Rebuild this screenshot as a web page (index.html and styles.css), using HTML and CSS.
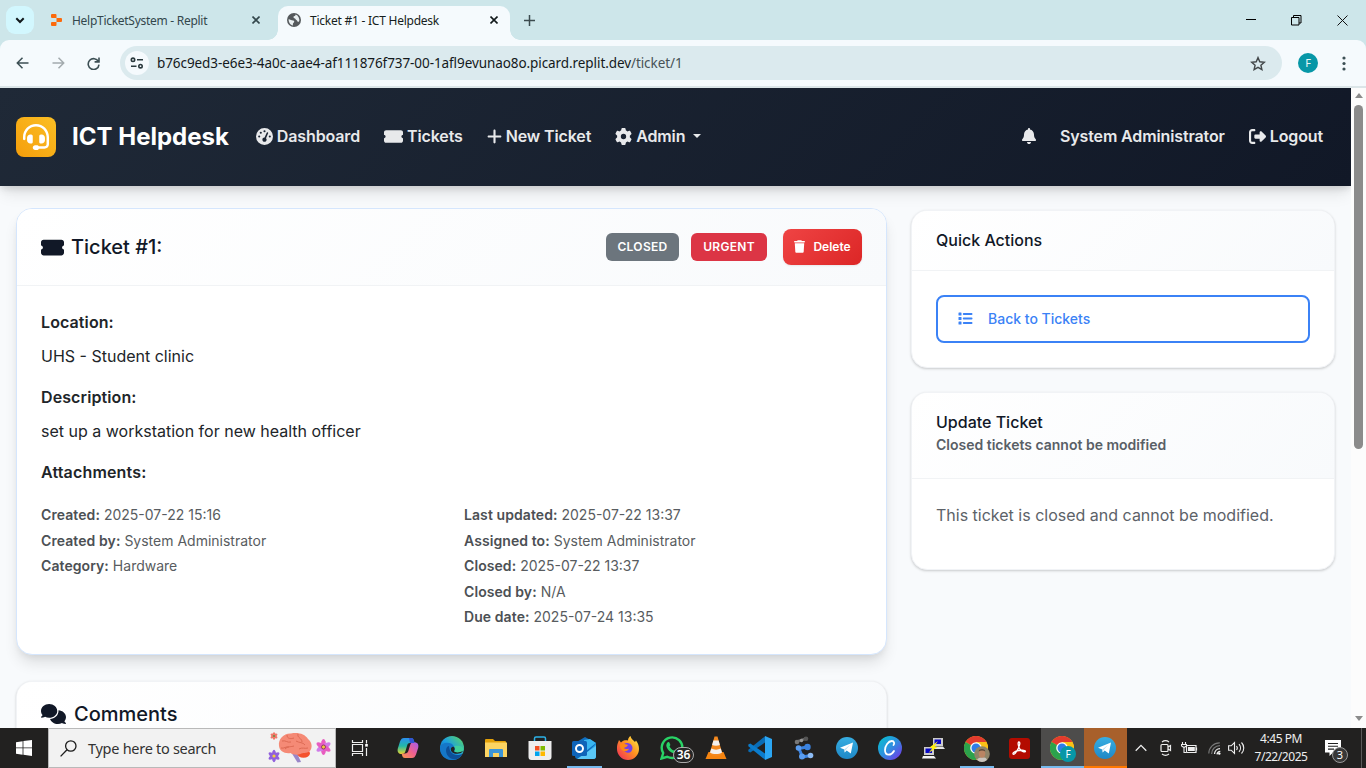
FILE: index.html
```html
<!DOCTYPE html>
<html lang="en">
<head>
<meta charset="utf-8">
<title>Ticket #1 - ICT Helpdesk</title>
<link rel="stylesheet" href="styles.css">
</head>
<body>
<svg class="defs" width="0" height="0">
  <defs>
    <linearGradient id="g-edge" x1="0" y1="1" x2="1" y2="0"><stop offset="0" stop-color="#0c59a4"/><stop offset=".5" stop-color="#1b9de2"/><stop offset="1" stop-color="#5fdc5a"/></linearGradient>
    <linearGradient id="g-cop1" x1="0" y1="0" x2="0" y2="1"><stop offset="0" stop-color="#2b8ef0"/><stop offset=".5" stop-color="#22b8a8"/><stop offset="1" stop-color="#e8d52c"/></linearGradient>
    <linearGradient id="g-cop2" x1="1" y1="0" x2="0" y2="1"><stop offset="0" stop-color="#a35cf0"/><stop offset=".5" stop-color="#f0608e"/><stop offset="1" stop-color="#fb9a4b"/></linearGradient>
    <linearGradient id="g-canva" x1="0" y1="0" x2="1" y2="1"><stop offset="0" stop-color="#00c4cc"/><stop offset=".5" stop-color="#2f8fe0"/><stop offset="1" stop-color="#7d2ae8"/></linearGradient>
    <linearGradient id="g-tele" x1="0" y1="0" x2="0" y2="1"><stop offset="0" stop-color="#37aee2"/><stop offset="1" stop-color="#1e88c6"/></linearGradient>
    <linearGradient id="g-fox" x1="1" y1="0" x2="0" y2="1"><stop offset="0" stop-color="#fff44f"/><stop offset=".45" stop-color="#ff9420"/><stop offset="1" stop-color="#f0235f"/></linearGradient>
    <symbol id="i-ticket" viewBox="0 0 576 512"><path d="M64 64C28.7 64 0 92.7 0 128v64c0 8.8 7.4 15.7 15.7 18.6C34.5 217.1 48 235 48 256s-13.5 38.9-32.3 45.4C7.4 304.3 0 311.2 0 320v64c0 35.3 28.7 64 64 64H512c35.3 0 64-28.7 64-64V320c0-8.8-7.4-15.7-15.7-18.6C541.5 294.9 528 277 528 256s13.5-38.9 32.3-45.4c8.3-2.9 15.7-9.8 15.7-18.6V128c0-35.3-28.7-64-64-64H64z"/></symbol>
    <symbol id="i-chrome" viewBox="0 0 24 24"><circle cx="12" cy="12" r="12" fill="#fbc116"/><path d="M12 12 1.6 6A12 12 0 0 1 22.4 6L12 6z" fill="#e33b2e"/><path d="M1.6 6A12 12 0 0 0 12 24L17.2 15 12 12z" fill="#2ba24c"/><path d="M12 6H22.4A12 12 0 0 1 12 24l5.2-9z" fill="#fbc116"/><circle cx="12" cy="12" r="5.8" fill="#fff"/><circle cx="12" cy="12" r="4.5" fill="#2f7de8"/></symbol>
    <symbol id="i-tele" viewBox="0 0 22 22"><circle cx="11" cy="11" r="11" fill="url(#g-tele)"/><path d="M4 10.8 17 5.6 14.8 16.5 10.7 13.6 8.7 15.6 8.3 12.4z" fill="#fff"/><path d="M8.3 12.4 14.2 7.8 9.3 13.2 8.7 15.6z" fill="#b9dcef"/></symbol>
    <symbol id="i-close" viewBox="0 0 8 8"><path d="M.5.5l7 7M7.5.5l-7 7" fill="none" stroke="currentColor" stroke-width="1.6"/></symbol>
  </defs>
</svg>

<header class="tabstrip">
  <span class="tab-search"><svg width="10" height="7" viewBox="0 0 10 7"><path d="M1.3 1.3 5 5l3.700-3.700" fill="none" stroke="#11191b" stroke-width="2"/></svg></span>
  <div class="tab">
    <svg class="favicon replit" width="11" height="12" viewBox="0 0 11 12"><path d="M1 0h3.500a1 1 0 0 1 1 1v3H1a1 1 0 0 1-1-1V1a1 1 0 0 1 1-1zM5.500 4H10a1 1 0 0 1 1 1v2a1 1 0 0 1-1 1H5.500zM1 8h4.500v3a1 1 0 0 1-1 1H1a1 1 0 0 1-1-1V9a1 1 0 0 1 1-1z" fill="#fc6a0c"/></svg>
    <span class="tab-title t1">HelpTicketSystem - Replit</span>
    <svg class="tab-close" width="8" height="8"><use href="#i-close"/></svg>
  </div>
  <div class="tab active">
    <svg class="favicon" width="14" height="14" viewBox="0 0 14 14"><circle cx="7" cy="7" r="7" fill="#55595c"/><path d="M1.600 6.200C3 6 4.500 7.500 6 7.500c1.500 0 1.600 1.500.6 2.200-.9.600-.6 1.500-.7 2.700C3.500 12 1.500 9.500 1.600 6.200zM8.600 1.600c-.2 1-.5 1.600-1.600 1.700-.7.100-.6 1.200-.1 1.700.6.600 1.500.3 1.700 1.200.2.900 1.500.7 1.700 1.700.1.700.9 1.200 1.700.7A5.600 5.600 0 0 0 8.600 1.600z" fill="#e9eff1"/></svg>
    <span class="tab-title t2">Ticket #1 - ICT Helpdesk</span>
    <svg class="tab-close" width="8" height="8"><use href="#i-close"/></svg>
  </div>
  <svg class="new-tab" width="11" height="11" viewBox="0 0 11 11"><path d="M5.500 0v11M0 5.500h11" stroke="#3c4b4f" stroke-width="1.500"/></svg>
  <div class="window-controls">
    <svg width="10" height="10" viewBox="0 0 10 10"><path d="M0 4.500h10" stroke="#000"/></svg>
    <svg width="11" height="11" viewBox="0 0 11 11"><path d="M.5 2.500h7.500v7.500H.5zM2.500 2.500V.5H10v7.500H8" fill="none" stroke="#000"/></svg>
    <svg width="11" height="11" viewBox="0 0 11 11"><path d="M.5.5l10 10M10.500.5l-10 10" stroke="#111"/></svg>
  </div>
</header>

<div class="toolbar">
  <svg class="tb-back" width="13" height="12" viewBox="0 0 13 12"><path d="M12.500 6H1.500M6.500.8 1.300 6l5.200 5.200" fill="none" stroke="#3c4f54" stroke-width="1.500"/></svg>
  <svg class="tb-fwd" width="13" height="12" viewBox="0 0 13 12"><path d="M.5 6h11M6.500.8 11.700 6l-5.200 5.200" fill="none" stroke="#a3abae" stroke-width="1.500"/></svg>
  <svg class="tb-reload" width="13" height="13" viewBox="0 0 13 13"><path d="M11.400 4.500A5.400 5.400 0 1 0 12 7.600M12 .6v4.300H7.600" fill="none" stroke="#3c4f54" stroke-width="1.600"/></svg>
  <div class="omnibox">
    <span class="site-info"><svg width="14" height="12" viewBox="0 0 14 12" fill="none" stroke="#2b3a3e" stroke-width="1.600"><circle cx="3" cy="2.800" r="1.700"/><path d="M7 2.800h6M1 9.200h5.500"/><circle cx="10.500" cy="9.200" r="1.700"/></svg></span>
    <span class="url">b76c9ed3-e6e3-4a0c-aae4-af111876f737-00-1afl9evunao8o.picard.replit.dev<span class="path">/ticket/1</span></span>
    <svg class="star" width="16" height="15" viewBox="0 0 16 15"><path d="M8 1.600l1.800 4.200 4.500.4-3.400 3 1 4.400L8 11.300l-3.900 2.300 1-4.400-3.400-3 4.500-.4z" fill="none" stroke="#43484a" stroke-width="1.400"/></svg>
  </div>
  <span class="profile">F</span>
  <svg class="menu" width="4" height="15" viewBox="0 0 4 15" fill="#3c4f54"><circle cx="2" cy="2" r="1.600"/><circle cx="2" cy="7.500" r="1.600"/><circle cx="2" cy="13" r="1.600"/></svg>
</div>

<div class="viewport">
  <div class="page">
    <nav class="navbar">
      <span class="logo"><svg width="26" height="26" viewBox="0 0 512 512" fill="#fff"><path d="M256 48C141.100 48 48 141.100 48 256v40c0 13.300-10.700 24-24 24s-24-10.700-24-24V256C0 114.600 114.600 0 256 0S512 114.600 512 256V400.100c0 48.600-39.400 88-88.100 88L313.600 488c-8.300 14.300-23.800 24-41.600 24H240c-26.500 0-48-21.500-48-48s21.500-48 48-48h32c17.800 0 33.300 9.700 41.600 24l110.400 .1c22.100 0 40-17.900 40-40V256c0-114.900-93.100-208-208-208zM144 208h16c17.700 0 32 14.300 32 32V352c0 17.700-14.300 32-32 32H144c-35.300 0-64-28.700-64-64V272c0-35.300 28.700-64 64-64zm224 0c35.300 0 64 28.700 64 64v48c0 35.300-28.700 64-64 64H352c-17.700 0-32-14.300-32-32V240c0-17.700 14.300-32 32-32h16z"/></svg></span>
      <span class="brand">ICT Helpdesk</span>
      <a class="nav-link"><svg width="17" height="17" viewBox="0 0 512 512"><path d="M0 256a256 256 0 1 1 512 0A256 256 0 1 1 0 256zM288 96a32 32 0 1 0 -64 0 32 32 0 1 0 64 0zM256 416c35.300 0 64-28.700 64-64c0-17.400-6.900-33.100-18.100-44.600L366 161.700c5.300-12.100-.2-26.300-12.300-31.600s-26.300 .2-31.600 12.300L257.900 288c-.6 0-1.300 0-1.900 0c-35.300 0-64 28.700-64 64s28.700 64 64 64zM176 144a32 32 0 1 0 -64 0 32 32 0 1 0 64 0zM96 288a32 32 0 1 0 0-64 32 32 0 1 0 0 64zm352-32a32 32 0 1 0 -64 0 32 32 0 1 0 64 0z"/></svg>Dashboard</a>
      <a class="nav-link"><svg width="19" height="17"><use href="#i-ticket"/></svg>Tickets</a>
      <a class="nav-link"><svg width="15" height="17" viewBox="0 0 448 512"><path d="M256 80c0-17.700-14.300-32-32-32s-32 14.300-32 32V224H48c-17.700 0-32 14.300-32 32s14.300 32 32 32H192V432c0 17.700 14.300 32 32 32s32-14.300 32-32V288H400c17.700 0 32-14.300 32-32s-14.300-32-32-32H256V80z"/></svg>New Ticket</a>
      <a class="nav-link admin"><svg width="17" height="17" viewBox="0 0 512 512"><path d="M495.900 166.600c3.200 8.700 .5 18.400-6.400 24.600l-43.300 39.400c1.100 8.300 1.700 16.800 1.700 25.400s-.6 17.100-1.700 25.400l43.300 39.400c6.900 6.200 9.600 15.900 6.400 24.600c-4.400 11.900-9.700 23.300-15.800 34.300l-4.700 8.100c-6.600 11-14 21.400-22.100 31.200c-5.900 7.200-15.700 9.600-24.500 6.800l-55.700-17.700c-13.400 10.300-28.200 18.900-44 25.400l-12.500 57.100c-2 9.100-9 16.300-18.200 17.800c-13.800 2.300-28 3.500-42.500 3.500s-28.700-1.200-42.500-3.500c-9.200-1.500-16.200-8.700-18.200-17.800l-12.500-57.100c-15.800-6.500-30.600-15.100-44-25.400L83.100 425.900c-8.800 2.800-18.600 .3-24.500-6.800c-8.100-9.800-15.500-20.200-22.100-31.200l-4.700-8.100c-6.100-11-11.400-22.400-15.800-34.300c-3.200-8.700-.5-18.400 6.400-24.600l43.300-39.400C64.600 273.100 64 264.600 64 256s.6-17.100 1.700-25.400L22.400 191.200c-6.900-6.200-9.600-15.900-6.400-24.600c4.400-11.900 9.700-23.300 15.800-34.300l4.700-8.100c6.600-11 14-21.400 22.100-31.200c5.900-7.200 15.700-9.600 24.500-6.800l55.700 17.700c13.400-10.300 28.200-18.900 44-25.400l12.500-57.100c2-9.100 9-16.300 18.200-17.800C227.300 1.200 241.500 0 256 0s28.700 1.200 42.500 3.500c9.200 1.500 16.200 8.700 18.200 17.800l12.500 57.100c15.800 6.500 30.600 15.100 44 25.400l55.700-17.700c8.800-2.800 18.600-.3 24.500 6.800c8.100 9.800 15.500 20.200 22.100 31.200l4.700 8.100c6.100 11 11.400 22.400 15.800 34.300zM256 336a80 80 0 1 0 0-160 80 80 0 1 0 0 160z"/></svg>Admin<i class="caret"></i></a>
      <div class="nav-right">
        <svg width="14" height="16" viewBox="0 0 448 512"><path d="M224 0c-17.700 0-32 14.300-32 32V51.200C119 66 64 130.600 64 208v18.800c0 47-17.300 92.400-48.500 127.600l-7.400 8.300c-8.400 9.400-10.400 22.900-5.300 34.400S19.400 416 32 416H416c12.600 0 24-7.400 29.200-18.900s3.100-25-5.300-34.400l-7.400-8.300C401.300 319.200 384 273.900 384 226.800V208c0-77.400-55-142-128-156.800V32c0-17.700-14.300-32-32-32zm45.300 493.300c12-12 18.700-28.300 18.700-45.300H224 160c0 17 6.700 33.300 18.700 45.300s28.300 18.700 45.300 18.700s33.300-6.700 45.300-18.700z"/></svg>
        <a class="user">System Administrator</a>
        <a class="nav-link logout"><svg width="17" height="17" viewBox="0 0 512 512"><path d="M377.900 105.900L500.700 228.700c7.200 7.200 11.300 17.100 11.300 27.300s-4.100 20.100-11.300 27.300L377.900 406.100c-6.400 6.400-15 9.900-24 9.900c-18.700 0-33.900-15.200-33.900-33.900l0-62.100-128 0c-17.700 0-32-14.300-32-32l0-64c0-17.700 14.300-32 32-32l128 0 0-62.100c0-18.700 15.200-33.900 33.900-33.900c9 0 17.600 3.600 24 9.900zM160 96L96 96c-17.700 0-32 14.300-32 32l0 256c0 17.700 14.300 32 32 32l64 0c17.700 0 32 14.300 32 32s-14.300 32-32 32l-64 0c-53 0-96-43-96-96L0 128C0 75 43 32 96 32l64 0c17.700 0 32 14.300 32 32s-14.300 32-32 32z"/></svg>Logout</a>
      </div>
    </nav>

    <main class="columns">
      <div class="col-main">
        <section class="card ticket">
          <div class="card-head ticket-head">
            <svg width="23" height="21" class="dark" viewBox="0 0 576 512" preserveAspectRatio="none"><use href="#i-ticket" width="576" height="512"/></svg>
            <h1>Ticket #1:</h1>
            <span class="badge closed">CLOSED</span>
            <span class="badge urgent">URGENT</span>
            <button class="delete"><svg width="11" height="13" viewBox="0 0 448 512" fill="#fff"><path d="M135.200 17.700L128 32H32C14.300 32 0 46.300 0 64S14.300 96 32 96H416c17.700 0 32-14.300 32-32s-14.300-32-32-32H320l-7.200-14.300C307.400 6.800 296.300 0 284.200 0H163.800c-12.100 0-23.200 6.800-28.600 17.700zM416 128H32L53.200 467c1.600 25.300 22.600 45 47.900 45H346.900c25.300 0 46.300-19.700 47.900-45L416 128z"/></svg>Delete</button>
          </div>
          <div class="ticket-body">
            <h2>Location:</h2>
            <p>UHS - Student clinic</p>
            <h2>Description:</h2>
            <p>set up a workstation for new health officer</p>
            <h2 class="last">Attachments:</h2>
            <div class="meta">
              <div><p><b>Created:</b> 2025-07-22 15:16</p><p><b>Created by:</b> System Administrator</p><p><b>Category:</b> Hardware</p></div>
              <div><p><b>Last updated:</b> 2025-07-22 13:37</p><p><b>Assigned to:</b> System Administrator</p><p><b>Closed:</b> 2025-07-22 13:37</p><p><b>Closed by:</b> N/A</p><p><b>Due date:</b> 2025-07-24 13:35</p></div>
            </div>
          </div>
        </section>
        <section class="card comments">
          <div class="card-head comments-head">
            <svg width="25" height="20" viewBox="0 0 640 512" class="dark"><path d="M208 352c114.900 0 208-78.800 208-176S322.900 0 208 0S0 78.800 0 176c0 38.600 14.700 74.300 39.600 103.400c-3.500 9.400-8.700 17.700-14.200 24.700c-4.800 6.200-9.700 11-13.300 14.300c-1.800 1.600-3.300 2.900-4.300 3.700c-.5 .4-.9 .7-1.100 .8l-.2 .2C1 327.200-1.400 334.400 .8 340.900S9.100 352 16 352c21.800 0 43.800-5.600 62.100-12.500c9.200-3.500 17.800-7.400 25.200-11.400C134.100 343.300 169.800 352 208 352zM448 176c0 112.300-99.100 196.900-216.500 207C255.800 457.400 336.400 512 432 512c38.200 0 73.900-8.700 104.700-23.900c7.500 4 16 7.900 25.200 11.400c18.300 6.900 40.300 12.500 62.100 12.500c6.900 0 13.100-4.500 15.200-11.100c2.100-6.600-.2-13.800-5.800-17.900l-.2-.2c-.2-.2-.6-.4-1.100-.8c-1-.8-2.500-2-4.300-3.700c-3.600-3.300-8.500-8.100-13.300-14.300c-5.500-7-10.700-15.400-14.200-24.700c24.900-29 39.600-64.700 39.600-103.400c0-92.800-84.900-168.900-192.600-175.500c.4 5.100 .6 10.300 .6 15.500z"/></svg>
            <h1>Comments</h1>
          </div>
        </section>
      </div>
      <aside class="col-side">
        <section class="card">
          <div class="card-head quick-head"><h3>Quick Actions</h3></div>
          <div class="quick-body">
            <a class="back"><svg width="15" height="13" viewBox="0 0 15 13" fill="#3b82f6"><rect x=".5" y=".5" width="3" height="3" rx=".5"/><rect x=".5" y="5" width="3" height="3" rx=".5"/><rect x=".5" y="9.500" width="3" height="3" rx=".5"/><rect x="4.800" y="1" width="9.700" height="2" rx=".9"/><rect x="4.800" y="5.500" width="9.700" height="2" rx=".9"/><rect x="4.800" y="10" width="9.700" height="2" rx=".9"/></svg>Back to Tickets</a>
          </div>
        </section>
        <section class="card">
          <div class="card-head update-head"><h3>Update Ticket</h3><small>Closed tickets cannot be modified</small></div>
          <div class="update-body">This ticket is closed and cannot be modified.</div>
        </section>
      </aside>
    </main>
  </div>
  <div class="scrollbar"><i class="arrow up"></i><i class="thumb"></i><i class="arrow down"></i></div>
</div>

<footer class="taskbar">
  <span class="start"><svg width="16" height="16" viewBox="0 0 16 16" fill="#fff"><path d="M0 2.200 6.600 1.200v6.300H0zM7.400 1.100 16 0v7.500H7.400zM0 8.300h6.600v6.400L0 13.700zM7.400 8.300H16V16l-8.600-1.200z"/></svg></span>
  <div class="searchbox">
    <svg width="17" height="17" viewBox="0 0 17 17" fill="none" stroke="#1c1c1c" stroke-width="1.300"><circle cx="10.800" cy="6" r="5.200"/><path d="M7 9.800.6 16.400"/></svg>
    <span>Type here to search</span>
    <svg class="brain" width="66" height="34" viewBox="0 0 66 34">
      <g fill="#f0786a"><ellipse cx="7" cy="5" rx="1.500" ry="3.800"/><ellipse cx="7" cy="5" rx="1.500" ry="3.800" transform="rotate(60 7 5)"/><ellipse cx="7" cy="5" rx="1.500" ry="3.800" transform="rotate(120 7 5)"/></g>
      <g fill="#9160dc"><ellipse cx="7" cy="25" rx="2.200" ry="6.200"/><ellipse cx="7" cy="25" rx="2.200" ry="6.200" transform="rotate(60 7 25)"/><ellipse cx="7" cy="25" rx="2.200" ry="6.200" transform="rotate(120 7 25)"/></g>
      <g fill="#e85cc0"><ellipse cx="56.500" cy="16" rx="2.800" ry="8"/><ellipse cx="56.500" cy="16" rx="2.800" ry="8" transform="rotate(60 56.500 16)" fill="#d07be8"/><ellipse cx="56.500" cy="16" rx="2.800" ry="8" transform="rotate(120 56.500 16)"/></g>
      <circle cx="7" cy="5" r="1.100" fill="#6a8f45"/><circle cx="7" cy="25" r="1.600" fill="#f2d03a"/><circle cx="56.500" cy="16" r="2" fill="#f5c63c" stroke="#703060" stroke-width=".8"/>
      <path d="M24 21l5.500 0 4.500 10-3.500.5z" fill="#9a86c8"/>
      <ellipse cx="36.500" cy="22.500" rx="6.500" ry="4.200" fill="#f4522d"/>
      <path d="M12 15C11 8 17 2 24 2.500 31 1 38 3 41 8c4 3 5 9 1.500 12.500-3 2-7 1-9 2.500-4 1.500-8 .5-10-1-6 1-11-2-11.500-7z" fill="#f58a76"/>
      <path d="M15 10c4-1 5 2 9 1M20 4c0 4 4 4 7 3m4-4c-1 4 4 4 4 8m-17 7c3-3 6-2 9-3m2-5c3 2 7 1 9 4m-6 4c3-2 6 0 9-1M14 17c3 1 5-2 8-1" fill="none" stroke="#d9654f" stroke-width=".9"/>
    </svg>
  </div>
  <span class="app taskview"><svg width="18" height="16" viewBox="0 0 18 16" fill="none" stroke="#eee" stroke-width="1.200"><path d="M1.500 0v2.500h10V0M1.500 16v-2.500h10V16M1.500 4.500h10v7h-10zM15.500 0v3.500M15.500 8v8"/><rect x="14.200" y="4" width="2.600" height="2.600" fill="#fff" stroke="none"/></svg></span>
  <span class="app"><svg width="22" height="20" viewBox="0 0 22 20"><path d="M7 0h7c2 0 2.500 1 3 3l.6 2H13c-2 0-2.500 1-3 3l-1.500 5c-.5 2-1.500 3-3.500 3-3.500 0-5-2-4.200-5.500L3 3.500C4 1 5 0 7 0z" fill="url(#g-cop1)"/><path d="M15 20H8c-2 0-2.500-1-3-3l-.4-1.500H8c2 0 3-1 3.500-3L13 7.500c.5-2 1.500-3.200 4-3.200 3.500 0 5 2.200 4.200 5.500L19 16.500C18 19 17 20 15 20z" fill="url(#g-cop2)"/><path d="M12 0h2c2 0 2.500 1 3 3l.6 2H13z" fill="#3154d4"/></svg></span>
  <span class="app"><svg width="24" height="24" viewBox="0 0 24 24"><circle cx="12" cy="12" r="12" fill="url(#g-edge)"/><path d="M0 12C1 7 7 5.500 11 7.500c2 1 3 2.500 3 4.500-1-1-3-1-4 1-1.500 4 2 8 6 8.500 2.500.2 4.500-.5 6-2.500C20 22 16.500 24 12 24 5 24 0 19 0 12z" fill="#1577c8"/><path d="M9 10C5 11 5.500 17 8 20c2 2.500 5 3.800 8.500 3.200C19 22 21.500 20 22.500 17.500c-4 2.500-9 2-11.500-1.500-1.500-2-1.800-4-2-6z" fill="#0d4f98"/><path d="M14.500 14.500c1-1.500.8-3.500-.5-4.500 5-.5 9 0 9.700 3.500-1 2.700-3.200 3.500-5.700 3.500-2.500 0-4.200-1-3.500-2.500z" fill="#3fcf9a"/><path d="M14 15c1-1 1-3 0-4-1.500-.8-3 .2-3.300 2 0 3.500 4 5.500 8 4.500 2-.4 3.300-1 4.300-2.500-3 1.800-8.500 2-9 0z" fill="#222"/></svg></span>
  <span class="app"><svg width="22" height="19" viewBox="0 0 22 19"><path d="M0 1a1 1 0 0 1 1-1h7l2 2h10a1 1 0 0 1 1 1v3H0z" fill="#e3a008"/><path d="M0 3.500h22V18H0z" fill="#fcd462"/><path d="M4 18v-7a1 1 0 0 1 1-1h12a1 1 0 0 1 1 1v7h-4v-4H8v4z" fill="#3b95d8"/></svg></span>
  <span class="app"><svg width="24" height="24" viewBox="0 0 24 24"><path d="M6.500 6V2.500a1.500 1.500 0 0 1 1.500-1.500h8a1.500 1.500 0 0 1 1.500 1.500V6" fill="none" stroke="#2db2e8" stroke-width="1.500"/><path d="M.5 5h23v16a3 3 0 0 1-3 3h-17a3 3 0 0 1-3-3z" fill="#eee"/><path d="M7 10h4.500v4.500H7z" fill="#f25022"/><path d="M12.500 10H17v4.500h-4.500z" fill="#7fba00"/><path d="M7 15.500h4.500V20H7z" fill="#00a4ef"/><path d="M12.500 15.500H17V20h-4.500z" fill="#ffb900"/></svg></span>
  <span class="app run"><svg width="25" height="23" viewBox="0 0 25 23"><path d="M3 6 13 0l11 6v13a3 3 0 0 1-3 3H6a3 3 0 0 1-3-3z" fill="#0f6cbd"/><path d="M12 3l6-1 6 4-10 8z" fill="#38b6f0"/><path d="M24 7v12a3 3 0 0 1-3 3H8z" fill="#28a8ea"/><path d="M5 22 24 9v10a3 3 0 0 1-3 3z" fill="#5ac8f7"/><rect y="4" width="15" height="15" rx="1.500" fill="#0f64b8"/><circle cx="7.500" cy="11.500" r="3.500" fill="none" stroke="#fff" stroke-width="2"/></svg></span>
  <span class="app"><svg width="24" height="24" viewBox="0 0 24 24"><path d="M1.500 8 3 4l2 2.500C7 4 10 4 12 4.500c0-2 1-3.500 2.500-4.500.5 3 3 4 4.500 6l1-1.500c2 2.500 3 5.500 3 8.500a11 11 0 0 1-22 0c0-2 0-3.500.5-5z" fill="url(#g-fox)"/><path d="M8 8c2-1.500 5-1 7 .5 2 2 2 5 .2 7s-5 1.500-7-.5c-1-1.500-.8-3 0-4l3-1z" fill="#7542e5"/><path d="M4 8c3-.5 6 .5 8 1-1 2-3 2-4 3 1 1 3 1.500 5 .5-1 3-5 4-7.500 1C4 12 4 10 4 8z" fill="#ff8a16"/></svg></span>
  <span class="app"><svg width="24" height="24" viewBox="0 0 24 24"><path d="M1.500 22.500 3.200 17a10.300 10.300 0 1 1 4 3.800z" fill="none" stroke="#29d366" stroke-width="2.400"/><path d="M7.500 6.500c.8-.8 1.700-.6 2 .2l.8 2c.2.600-.8 1.400-.8 1.800 1 2 2.500 3.300 4.600 4.100.5 0 1.300-1.400 1.800-1.200l2.200 1.100c.6.400.2 1.700-.5 2.400-1.500 1.500-4 .9-6.500-.6s-4.300-4-4.700-6c-.2-1.500.2-2.900 1.100-3.800z" fill="#29d366"/></svg><b class="count">36</b></span>
  <span class="app"><svg width="22" height="24" viewBox="0 0 22 24"><path d="M3.500 16h15l3 7H.5z" fill="#f58410"/><path d="M9.500.5h3L17.500 18c-3 2.500-10 2.500-13 0z" fill="#f4891f"/><path d="M8.400 4.500h5.200l1.300 4.500c-2 1-5.800 1-7.800 0zM6.300 12.500c3 1.500 6.500 1.500 9.500 0L17 16.500c-3 2-9 2-12 0z" fill="#f3f0ee"/></svg></span>
  <span class="app"><svg width="24" height="24" viewBox="0 0 24 24"><path d="M17 .2v6.300L2.300 16.500.3 15.500v-1.800z" fill="#0a6db6"/><path d="M.3 8.500 2.300 7.500 17 17.500v6.300L.3 10.300z" fill="#0b7ccc"/><path d="M17 0l7 3v18l-7 3z" fill="#2ba6f3"/></svg></span>
  <span class="app"><svg width="22" height="24" viewBox="0 0 22 24"><path d="M4 5.500 13 2.500" stroke="#666" stroke-width="2.500"/><circle cx="4" cy="6" r="2.300" fill="#777"/><circle cx="8.500" cy="4.500" r="1.700" fill="#999"/><circle cx="13" cy="2.800" r="2.300" fill="#555"/><path d="M6 12.500l8-1.500M6 12.500l3.500 8.500 8-1.500" stroke="#3b83e0" stroke-width="3" fill="none"/><circle cx="5.500" cy="12" r="2.800" fill="#5a9df0"/><circle cx="14.500" cy="11" r="3.200" fill="#3b83e0"/><circle cx="9" cy="20.500" r="3" fill="#5a9df0"/><circle cx="17.500" cy="19.500" r="2.800" fill="#8dbcf5"/></svg></span>
  <span class="app narrow"><svg width="22" height="22"><use href="#i-tele"/></svg></span>
  <span class="app narrow"><svg width="24" height="24" viewBox="0 0 24 24"><circle cx="12" cy="12" r="12" fill="url(#g-canva)"/><path d="M15.500 9c1.200-1.500.8-4-1.700-4-3.500 0-6.800 5-6.800 9 0 3 1.500 4.700 3.700 4.700s4-1.400 5.300-3.700" fill="none" stroke="#fff" stroke-width="1.800" stroke-linecap="round"/></svg></span>
  <span class="app narrow"><svg width="23" height="23" viewBox="0 0 23 23"><path d="M11 1h10v8H11z" fill="#ccc"/><path d="M12.500 2.500h6.500V7h-6.500z" fill="#0808c8"/><path d="M9 9.500h12l2 2.500H11z" fill="#e4e4e4"/><path d="M2 10h10v8H2z" fill="#ccc"/><path d="M3.500 11.500H10V16H3.500z" fill="#0808c8"/><path d="M1 19h11l2 2.500H0z" fill="#f4f4f4"/><path d="M16 4l-8.500 6.500 3 .5-4 5 9-6-3-.8z" fill="#ffee10"/></svg></span>
  <span class="app narrow run"><svg width="24" height="24"><use href="#i-chrome"/></svg><svg class="avatar" width="16" height="16" viewBox="0 0 16 16"><circle cx="8" cy="8" r="7.800" fill="#8d8468"/><path d="M3 14c1-3 9-4 10 0a7.500 7.500 0 0 1-10 0z" fill="#c9c4bd"/><ellipse cx="8" cy="7.500" rx="3.300" ry="4.300" fill="#b98563"/><path d="M4.700 5.500C5 2.300 11 2.300 11.300 5.500c-2-1.500-4.600-1.500-6.600 0z" fill="#5a483a"/></svg></span>
  <span class="app narrow"><svg width="21" height="21" viewBox="0 0 21 21"><rect width="21" height="21" rx="3" fill="#b30b00"/><path d="M10 4c2 0 0 6-2.500 9.500C6 16 4.500 16.800 4 16s2-3 6-3.500 6.500-.2 6.500.8-3 .7-5-1.500S8.200 4 10 4z" fill="none" stroke="#fff" stroke-width="1.300"/></svg></span>
  <span class="app narrow current"><svg width="24" height="24"><use href="#i-chrome"/></svg><b class="avatar f">F</b></span>
  <span class="app narrow alert"><svg width="22" height="22"><use href="#i-tele"/></svg></span>
  <div class="tray">
    <svg class="chev" width="12" height="8" viewBox="0 0 12 8"><path d="M.7 6.700 6 1.400l5.300 5.300" fill="none" stroke="#eee" stroke-width="1.300"/></svg>
    <svg class="cam" width="12" height="16" viewBox="0 0 12 16" fill="none" stroke="#eee" stroke-width="1.200"><rect x="1" y="4.500" width="7" height="7" rx="1"/><path d="M8 7l2.500-1.500v5L8 9M2 2c2-1.500 5-1.500 7 0M2 14c2 1.500 5 1.500 7 0"/></svg>
    <svg class="bat" width="17" height="12" viewBox="0 0 17 12"><path d="M5.500 3.500h9.500v7H5.500zM15.500 5.500v3" fill="none" stroke="#eee" stroke-width="1.200"/><path d="M7 5h6.800v4H7z" fill="#eee"/><path d="M1.500 0v2M4.500 0v2M.5 2.500h5V4L3 5.500.5 4zM3 5v5.500h2.500" fill="#222" stroke="#eee" stroke-width="1.100"/></svg>
    <svg class="wifi" width="13" height="13" viewBox="0 0 13 13" fill="none"><path d="M.8 11.500A10.700 10.700 0 0 1 11.800.8M3.600 12A8.300 8.300 0 0 1 12 3.600" stroke="#777" stroke-width="1.200"/><path d="M6.500 12A5.600 5.600 0 0 1 12 6.700M9 12.300A3.500 3.500 0 0 1 12.300 9.300" stroke="#eee" stroke-width="1.300"/><circle cx="11.300" cy="11.600" r="1.200" fill="#fff"/></svg>
    <svg class="vol" width="17" height="14" viewBox="0 0 17 14" fill="none" stroke="#eee" stroke-width="1.100"><path d="M.6 4.800h2.600L6.500 1.500v11L3.200 9.200H.6zM8.500 5c1 1.200 1 2.800 0 4M11 3.200c2 2.200 2 5.400 0 7.600M13.500 1.500c3 3.200 3 7.800 0 11"/></svg>
    <div class="clock"><span>4:45 PM</span><span>7/22/2025</span></div>
    <span class="notif"><svg width="17" height="17" viewBox="0 0 17 17"><path d="M0 0h16v12.500H8L4.500 16v-3.500H0z" fill="#fff"/><path d="M3 3.500h10M3 6.300h10M3 9.100h6" stroke="#222" stroke-width="1.100"/></svg><b>3</b></span>
    <i class="peek"></i>
  </div>
</footer>
</body>
</html>
```

FILE: styles.css
```css
* { box-sizing: border-box; }
body { margin: 0; width: 1366px; height: 768px; overflow: hidden; display: flex; flex-direction: column; font-family: Inter, sans-serif; font-size: 16px; color: #212529; background: #cde6ea; }
h1, h2, h3, p { margin: 0; }
svg { display: block; flex: none; }
.defs { position: absolute; }

/* browser tabs */
.tabstrip { height: 40px; display: flex; align-items: flex-start; padding-left: 6px; font-family: "Noto Sans", sans-serif; font-size: 12px; color: #33474c; }
.tab-search { width: 28px; height: 28px; margin-top: 6px; border-radius: 9px; background: #d2f7fe; display: grid; place-items: center; }
.tab { display: flex; align-items: center; height: 34px; margin-top: 6px; width: 244px; padding: 0 18px 6px 17px; }
.tab.active { width: 232px; height: 34px; background: #f5fafd; border-radius: 10px 10px 0 0; padding: 0 12px 6px 9px; color: #161e20; position: relative; }
.tab.active::before, .tab.active::after { content: ""; position: absolute; bottom: 0; width: 10px; height: 10px; }
.tab.active::before { left: -10px; background: radial-gradient(circle at 0 0, transparent 9.500px, #f5fafd 10px); }
.tab.active::after { right: -10px; background: radial-gradient(circle at 100% 0, transparent 9.500px, #f5fafd 10px); }
.favicon { margin-right: 9px; }
.replit { margin-right: 10px; }
.tab-title { flex: 1; white-space: nowrap; }
.t1 { letter-spacing: -0.280px; }
.t2 { letter-spacing: -0.240px; }
.tab-close { color: #33474c; }
.active .tab-close { color: #11191b; }
.new-tab { margin: 15px 0 0 14px; }
.window-controls { margin: 15px 18px 0 auto; display: flex; gap: 35px; }

/* browser toolbar */
.toolbar { height: 48px; flex: none; background: #f5fafd; border-bottom: 2px solid #dbe5e8; border-radius: 9px 9px 0 0; display: flex; align-items: center; padding: 0 20px 0 16px; }
.tb-fwd { margin-left: 23px; }
.tb-reload { margin-left: 22px; }
.omnibox { margin-left: 20px; width: 1162px; height: 34px; border-radius: 17px; background: #dbeaee; display: flex; align-items: center; padding: 0 16px 0 5px; font-family: "Noto Sans", sans-serif; font-size: 13.500px; color: #14191b; }
.site-info { width: 24px; height: 24px; border-radius: 50%; background: #f5fafd; display: grid; place-items: center; margin-right: 8px; }
.url { letter-spacing: -0.080px; white-space: nowrap; }
.path { color: #485256; }
.star { margin-left: auto; }
.profile { margin-left: 16px; width: 20px; height: 20px; border-radius: 50%; background: #0797a7; color: #e9f6f7; font: 11px/20px "Noto Sans", sans-serif; text-align: center; }
.menu { margin-left: auto; }

/* page */
.viewport { height: 640px; flex: none; display: flex; }
.page { width: 1351px; background: #f8fafc; overflow: hidden; }
.navbar { height: 98px; padding: 0 28px 0 16px; display: flex; align-items: center; background: linear-gradient(135deg, #1f2937 0%, #111827 100%); box-shadow: 0 10px 15px -3px rgba(0,0,0,.1), 0 4px 6px -2px rgba(0,0,0,.05), 0 3px 8px rgba(0,0,0,.08); position: relative; color: #e8e9eb; font-weight: 600; }
.navbar svg { fill: #e8e9eb; }
.logo { width: 40px; height: 40px; border-radius: 8px; background: linear-gradient(45deg, #f59e0b, #fbbf24); display: grid; place-items: center; }
.navbar .logo svg { fill: #fff; }
.brand { margin: 0 27px 0 16px; padding-bottom: 2px; font-size: 24px; font-weight: 700; color: #fff; white-space: nowrap; }
.nav-link { display: flex; align-items: center; gap: 4px; margin-right: 24px; padding-bottom: 2px; letter-spacing: -0.130px; white-space: nowrap; }
.caret { margin-left: 4px; border: 4px solid transparent; border-top-color: #e8e9eb; border-bottom: 0; }
.nav-right { margin-left: auto; display: flex; align-items: center; padding-bottom: 2px; }
.user { margin: 0 24px 0 24px; letter-spacing: -0.130px; white-space: nowrap; }
.logout { margin: 0; padding: 0; }

.columns { display: flex; gap: 24px; padding: 22px 16px 0; align-items: flex-start; }
.col-main { width: 871px; flex: none; }
.col-side { width: 424px; flex: none; padding-top: 2px; }
.card { background: #fff; border: 1px solid #f1f3f6; border-radius: 16px; box-shadow: 0 1px 3px rgba(0,0,0,.14), 0 1px 2px rgba(0,0,0,.06); overflow: hidden; margin-bottom: 24px; }
.card.ticket { height: 447px; border-color: #d5e6fd; box-shadow: 0 10px 15px -3px rgba(0,0,0,.12), 0 4px 6px -2px rgba(0,0,0,.06); margin-bottom: 26px; }
.card-head { background: linear-gradient(135deg, #fff 0%, #f8fafc 100%); border-bottom: 1px solid #f1f3f5; padding: 0 24px; }
.dark { fill: #111827; }
h1 { font-size: 20px; font-weight: 500; color: #111827; }
.ticket-head { height: 77px; display: flex; align-items: center; }
.ticket-head h1 { margin-left: 7px; margin-right: auto; }
.badge { height: 28px; border-radius: 6px; color: #fff; font-size: 12px; font-weight: 600; line-height: 28px; text-align: center; letter-spacing: .3px; }
.closed { width: 73px; background: #6c757d; margin-right: 12px; }
.urgent { width: 76px; background: #dc3545; margin-right: 16px; }
.delete { width: 79px; height: 36px; border: 0; border-radius: 8px; background: linear-gradient(135deg, #ef4444, #dc2626); color: #fff; font: 600 12px Inter, sans-serif; display: flex; align-items: center; justify-content: center; gap: 8px; padding: 0 0 1px; box-shadow: 0 1px 2px rgba(0,0,0,.08); }
.ticket-body { padding: 23px 24px; }
.ticket-body h2 { font-size: 16px; font-weight: 600; line-height: 26px; margin-bottom: 8px; letter-spacing: .1px; }
.ticket-body > p { line-height: 26px; margin-bottom: 15px; }
.ticket-body h2.last { margin-bottom: 17px; letter-spacing: .160px; }
.meta { display: grid; grid-template-columns: 423px 1fr; font-size: 14px; line-height: 25.500px; color: #585c60; }
.meta b { font-weight: 600; color: #4c5054; letter-spacing: .080px; }
.comments { height: 200px; }
.comments-head { height: 77px; display: flex; align-items: center; padding-bottom: 13px; }
.comments-head h1 { margin-left: 8px; }

h3 { font-size: 16px; font-weight: 500; color: #111827; line-height: 24px; }
.quick-head { height: 60px; padding-top: 17px; }
.quick-body { padding: 24px; }
.back { display: flex; align-items: center; height: 48px; border: 2px solid #3b82f6; border-radius: 8px; padding: 0 0 2px 20px; gap: 15px; color: #3b82f6; font-size: 14px; font-weight: 500; }
.update-head { height: 86px; padding-top: 17px; }
.update-head small { display: block; font-size: 14px; font-weight: 600; color: #595f66; line-height: 22px; }
.update-body { height: 90px; padding: 23px 24px; line-height: 26px; color: #5c6268; }

.scrollbar { width: 15px; background: #fcfcfc; display: flex; flex-direction: column; align-items: center; padding: 5px 0 7px; }
.arrow { border: 4.500px solid transparent; }
.up { border-top: 0; border-bottom: 5px solid #8b8b8b; }
.down { margin-top: auto; border-bottom: 0; border-top: 5px solid #8b8b8b; }
.thumb { width: 9px; height: 344px; margin-top: 7px; border-radius: 5px; background: #8b8b8b; }

/* desktop taskbar */
.taskbar { height: 40px; flex: none; background: #222120; display: flex; }
.start { width: 48px; display: grid; place-items: center; }
.searchbox { width: 288px; height: 40px; background: #f2f2f2; border: 1px solid #b9b9b9; display: flex; align-items: center; padding: 0 2px 0 11px; color: #333; font: 14.500px "Noto Sans", sans-serif; }
.searchbox span { margin-left: 11px; letter-spacing: -0.280px; white-space: nowrap; }
.brain { margin-left: auto; }
.app { width: 44px; display: grid; place-items: center; position: relative; }
.taskview { width: 50px; padding-right: 2px; }
.narrow { width: 43px; padding-right: 1px; }
.run::after, .current::after, .alert::after { content: ""; position: absolute; bottom: 0; left: 5px; right: 4px; height: 2px; background: #76b9ed; }
.current { background: #4d4c4b; }
.alert { background: #a8602b; }
.current::after { left: 0; right: 0; }
.alert::after { left: 0; right: 0; background: #ff7800; }
.count { position: absolute; left: 23px; top: 19px; width: 21px; height: 16px; border: 1px solid #aaa; border-radius: 8px; background: #262626; color: #fff; font: 600 12px/14px "Noto Sans", sans-serif; text-align: center; }
.avatar { position: absolute; left: 19px; top: 18px; width: 16px; height: 16px; }
.avatar.f { border-radius: 50%; background: #0797a7; color: #fff; font: 10px/16px "Noto Sans", sans-serif; text-align: center; }
.tray { flex: 1; display: flex; align-items: center; padding-left: 8px; color: #eee; }
.cam { margin-left: 13px; }
.bat { margin-left: 9px; }
.wifi { margin-left: 10px; }
.vol { margin-left: 7px; }
.clock { margin-left: 7px; width: 58px; display: flex; flex-direction: column; align-items: center; font: 12px/18px "Noto Sans", sans-serif; letter-spacing: -0.450px; white-space: nowrap; }
.notif { margin-left: 15px; position: relative; }
.notif b { position: absolute; left: 7px; top: 7px; width: 16px; height: 16px; border: 1px solid #999; border-radius: 50%; background: #383838; color: #fff; font: 11px/14px "Noto Sans", sans-serif; text-align: center; }
.peek { margin-left: auto; margin-right: 4px; width: 1px; height: 40px; background: #5a5a5a; }
```
